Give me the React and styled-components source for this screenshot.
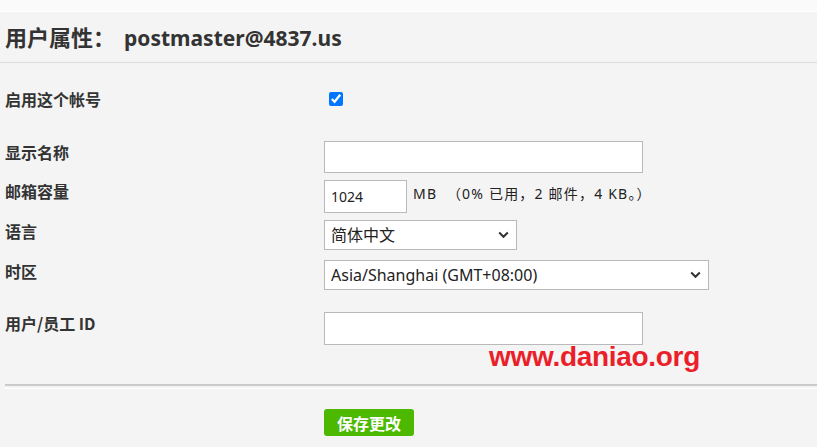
import React from 'react';
import styled, { createGlobalStyle } from 'styled-components';

const GlobalStyle = createGlobalStyle`
  html, body {
    margin: 0;
    padding: 0;
    background: #f4f4f4;
  }
  body {
    font-family: "Noto Sans", "Noto Sans CJK SC", sans-serif;
    color: #333;
  }
`;

const Page = styled.div`
  position: relative;
  width: 817px;
  height: 447px;
  overflow: hidden;
  background: #f4f4f4;
`;

const TopStrip = styled.div`
  height: 11px;
  background: #fafafa;
  border-bottom: 1px solid #fff;
`;

const Header = styled.div`
  height: 50px;
  display: flex;
  align-items: center;
  padding-left: 5px;
  border-bottom: 1px solid #dcdcdc;
`;

const Title = styled.h1`
  margin: 0;
  display: flex;
  align-items: baseline;
  font-size: 21px;
  font-weight: 700;
  line-height: 28px;
  color: #333;
`;

const TitleLabel = styled.span`
  font-family: "Noto Sans CJK SC", sans-serif;
  font-size: 22px;
  width: 119px;
`;

const Label = styled.label`
  font-family: "Noto Sans CJK SC", sans-serif;
  font-size: 16px;
  font-weight: 700;
  line-height: 22px;
  color: #333;
`;

const Form = styled.div`
  padding: 25px 0 0 5px;
`;

const Field = styled.div`
  display: grid;
  grid-template-columns: 319px 1fr;
  align-items: ${p => (p.$center ? 'center' : 'start')};
  margin-top: ${p => p.$gap || 0}px;
`;

const Control = styled.div`
  display: flex;
  align-items: center;
  gap: 6px;
`;

const Check = styled.input`
  width: 14px;
  height: 14px;
  margin: 0 0 0 5px;
  accent-color: #0075ff;
`;

const TextInput = styled.input`
  box-sizing: border-box;
  width: ${p => p.$w}px;
  height: ${p => p.$h || 32}px;
  padding: 0 6px;
  border: 1px solid #b9b9b9;
  background: #fff;
  font-family: "Noto Sans", sans-serif;
  font-size: 14px;
  color: #222;
  outline: none;
`;

const Hint = styled.span`
  align-self: flex-start;
  margin-top: 3px;
  font-size: 14px;
  letter-spacing: 1.2px;
  color: #222;
  white-space: pre;
`;

const SelectWrap = styled.div`
  position: relative;
  width: ${p => p.$w}px;
`;

const Select = styled.select`
  box-sizing: border-box;
  width: 100%;
  height: ${p => p.$h}px;
  padding: 0 28px 0 6px;
  border: 1px solid #b9b9b9;
  border-radius: 0;
  background: #fff;
  appearance: none;
  font-family: "Noto Sans", "Noto Sans CJK SC", sans-serif;
  font-size: 16px;
  color: #222;
  outline: none;
`;

const Chevron = styled.svg`
  position: absolute;
  right: 8px;
  top: 50%;
  margin-top: -4px;
  pointer-events: none;
`;

const Divider = styled.div`
  margin: 39px 0 0 5px;
  height: 2px;
  border-top: 2px solid #cbcbcb;
  border-bottom: 1px solid #fff;
`;

const Actions = styled.div`
  padding: 20px 0 0 324px;
`;

const SaveButton = styled.button`
  width: 90px;
  height: 27px;
  border: none;
  border-radius: 3px;
  background: #4cb900;
  color: #fff;
  font-family: "Noto Sans CJK SC", sans-serif;
  font-size: 16px;
  font-weight: 700;
  padding: 0;
  cursor: pointer;
`;

const Watermark = styled.div`
  position: absolute;
  left: 489px;
  top: 341px;
  font-family: "Liberation Sans", Arial, sans-serif;
  font-size: 28px;
  font-weight: 700;
  color: #ea1f2a;
  letter-spacing: -0.3px;
`;

function Arrow() {
  return (
    <Chevron width="11" height="8" viewBox="0 0 11 8">
      <path d="M1.2 1.5 L5.5 5.8 L9.8 1.5" fill="none" stroke="#333" strokeWidth="2" />
    </Chevron>
  );
}

export default function App() {
  return (
    <Page>
      <GlobalStyle />
      <TopStrip />
      <Header>
        <Title>
          <TitleLabel>用户属性：</TitleLabel>
          postmaster@4837.us
        </Title>
      </Header>
      <Form>
        <Field $center>
          <Label>启用这个帐号</Label>
          <Control>
            <Check type="checkbox" defaultChecked />
          </Control>
        </Field>
        <Field $gap={31}>
          <Label>显示名称</Label>
          <Control>
            <TextInput $w={319} $h={32} defaultValue="" />
          </Control>
        </Field>
        <Field $gap={7}>
          <Label>邮箱容量</Label>
          <Control>
            <TextInput $w={83} $h={33} defaultValue="1024" />
            <Hint>MB  （0% 已用，2 邮件，4 KB。）</Hint>
          </Control>
        </Field>
        <Field $gap={7}>
          <Label>语言</Label>
          <Control>
            <SelectWrap $w={193}>
              <Select $h={30} defaultValue="zh">
                <option value="zh">简体中文</option>
                <option value="en">English</option>
              </Select>
              <Arrow />
            </SelectWrap>
          </Control>
        </Field>
        <Field $gap={10}>
          <Label>时区</Label>
          <Control>
            <SelectWrap $w={385}>
              <Select $h={30} defaultValue="sh">
                <option value="sh">Asia/Shanghai (GMT+08:00)</option>
              </Select>
              <Arrow />
            </SelectWrap>
          </Control>
        </Field>
        <Field $gap={22}>
          <Label>用户/员工 ID</Label>
          <Control>
            <TextInput $w={319} $h={33} defaultValue="" />
          </Control>
        </Field>
      </Form>
      <Divider />
      <Actions>
        <SaveButton type="button">保存更改</SaveButton>
      </Actions>
      <Watermark>www.daniao.org</Watermark>
    </Page>
  );
}
